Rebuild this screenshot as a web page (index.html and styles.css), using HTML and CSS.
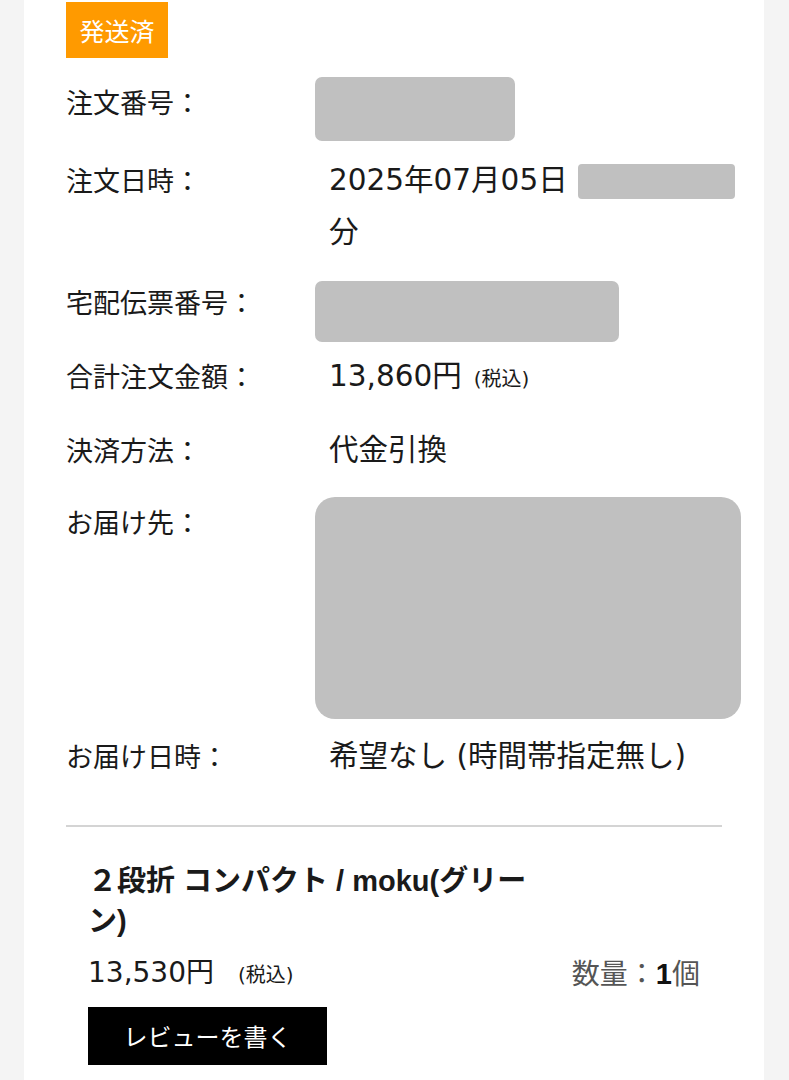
FILE: index.html
```html
<!DOCTYPE html>
<html lang="ja">
<head>
<meta charset="utf-8">
<link rel="stylesheet" href="styles.css">
</head>
<body>
<div class="card">
  <div class="badge">発送済</div>

  <div class="info">
    <div class="row row-first">
      <div class="label">注文番号：</div>
      <div class="value"><span class="mask mask-order"></span></div>
    </div>
    <div class="row row-date">
      <div class="label">注文日時：</div>
      <div class="value">2025年07月05日<span class="mask mask-time"></span><br>分</div>
    </div>
    <div class="row">
      <div class="label">宅配伝票番号：</div>
      <div class="value"><span class="mask mask-slip"></span></div>
    </div>
    <div class="row">
      <div class="label">合計注文金額：</div>
      <div class="value">13,860円<span class="tax">(税込)</span></div>
    </div>
    <div class="row row-pay">
      <div class="label">決済方法：</div>
      <div class="value">代金引換</div>
    </div>
    <div class="row row-address">
      <div class="label">お届け先：</div>
      <div class="value"><div class="mask-address"></div></div>
    </div>
    <div class="row">
      <div class="label">お届け日時：</div>
      <div class="value">希望なし (時間帯指定無し)</div>
    </div>
  </div>

  <hr class="divider">

  <div class="product">
    <div class="product-name">２段折 コンパクト / moku(グリーン)</div>
    <div class="product-meta">
      <div class="price">13,530円<span class="tax tax-wide">(税込)</span></div>
      <div class="qty">数量：<b>1</b>個</div>
    </div>
    <div class="review-btn">レビューを書く</div>
  </div>
</div>
</body>
</html>
```

FILE: styles.css
```css
html, body {
  margin: 0;
  padding: 0;
}
body {
  background: #f4f4f4;
  font-family: "Noto Sans CJK JP", "Noto Sans", sans-serif;
  color: #1a1a1a;
  height: 1080px;
  overflow: hidden;
}
.card {
  background: #ffffff;
  margin: 0 25px 0 24px;
  padding: 2px 42px 40px 42px;
  min-height: 1080px;
  box-sizing: border-box;
}
.badge {
  display: inline-block;
  background: #ff9a00;
  color: #ffffff;
  font-size: 25px;
  line-height: 56px;
  width: 102px;
  text-align: center;
}
.info {
  margin-top: 18px;
  display: flex;
  flex-direction: column;
  gap: 22px;
}
.row {
  display: grid;
  grid-template-columns: 263px 1fr;
  font-size: 27px;
  line-height: 52px;
}
.row-first {
  margin-bottom: 4px;
}
.row-date {
  margin-bottom: -4px;
}
.row-pay {
  margin-bottom: -2px;
}
.label {
  color: #1a1a1a;
}
.value {
  position: relative;
  min-height: 52px;
  font-family: "DejaVu Sans", "Noto Sans CJK JP", sans-serif;
  font-size: 29.5px;
  line-height: 52px;
}
.tax {
  font-size: 20px;
  line-height: 1;
  margin-left: 12px;
}
.mask {
  position: absolute;
  background: #c0c0c0;
  border-radius: 7px;
}
.mask-order {
  left: -14px;
  top: 1px;
  width: 200px;
  height: 64px;
}
.mask-time {
  left: 249px;
  top: 10px;
  width: 157px;
  height: 35px;
  border-radius: 4px;
}
.mask-slip {
  left: -14px;
  top: 5px;
  width: 304px;
  height: 61px;
}
.mask-address {
  margin-left: -14px;
  margin-top: 1px;
  width: 426px;
  height: 222px;
  background: #c0c0c0;
  border-radius: 20px;
}
.row-address {
  margin-bottom: -11px;
}
.divider {
  border: none;
  height: 2px;
  background: #d4d4d4;
  margin: 43px 0 0 0;
}
.product {
  padding: 34px 22px 0 22px;
}
.product-name {
  font-family: "Liberation Sans", "Noto Sans CJK JP", sans-serif;
  font-size: 29px;
  font-weight: 700;
  line-height: 40px;
  width: 452px;
}
.product-meta {
  display: flex;
  justify-content: space-between;
  align-items: center;
  line-height: 40px;
  margin-top: 11px;
}
.price {
  font-family: "DejaVu Sans", "Noto Sans CJK JP", sans-serif;
  font-size: 28px;
}
.tax-wide {
  margin-left: 24px;
}
.qty {
  font-size: 28px;
  color: #555555;
}
.qty b {
  font-family: "Liberation Sans", sans-serif;
  color: #111111;
  font-weight: 700;
  font-size: 29px;
}
.review-btn {
  display: inline-block;
  margin-top: 13px;
  background: #000000;
  color: #ffffff;
  font-size: 24px;
  width: 239px;
  height: 58px;
  line-height: 58px;
  text-align: center;
}
```
